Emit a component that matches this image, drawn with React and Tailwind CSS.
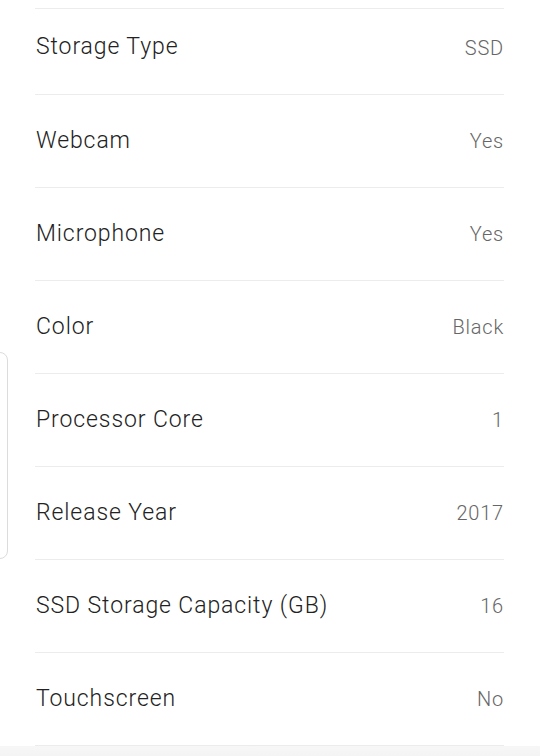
import React from "react";

const specs = [
  { label: "Storage Type", value: "SSD" },
  { label: "Webcam", value: "Yes" },
  { label: "Microphone", value: "Yes" },
  { label: "Color", value: "Black" },
  { label: "Processor Core", value: "1" },
  { label: "Release Year", value: "2017" },
  { label: "SSD Storage Capacity (GB)", value: "16" },
  { label: "Touchscreen", value: "No" },
];

const SpecRow = ({ label, value, first }) => (
  <div
    className={`flex items-center justify-between border-b border-[#ececec] ${
      first ? "h-[86px] pb-[8px]" : "h-[93px]"
    }`}
  >
    <span className="pl-[1px] text-[23px] font-light tracking-[0.9px] text-[#222]">{label}</span>
    <span className="text-[20px] font-light tracking-[0.8px] text-[#666]">{value}</span>
  </div>
);

export default function App() {
  return (
    <div
      className="relative w-[540px] h-[756px] overflow-hidden bg-white"
      style={{ fontFamily: 'Roboto, "Liberation Sans", Arial, sans-serif' }}
    >
      {/* edge of a card sitting off to the left */}
      <div className="absolute left-[-40px] top-[352px] h-[207px] w-[48px] rounded-lg border border-[#dcdcdc] bg-white" />

      <div className="pl-[35px] pr-[36px] pt-[8px]">
        <div className="border-t border-[#ececec]">
          {specs.map((s, i) => (
            <SpecRow key={s.label} label={s.label} value={s.value} first={i === 0} />
          ))}
        </div>
      </div>
      <div className="h-[12px] bg-gradient-to-b from-[#f7f7f7] to-[#f3f3f3]" />
    </div>
  );
}
